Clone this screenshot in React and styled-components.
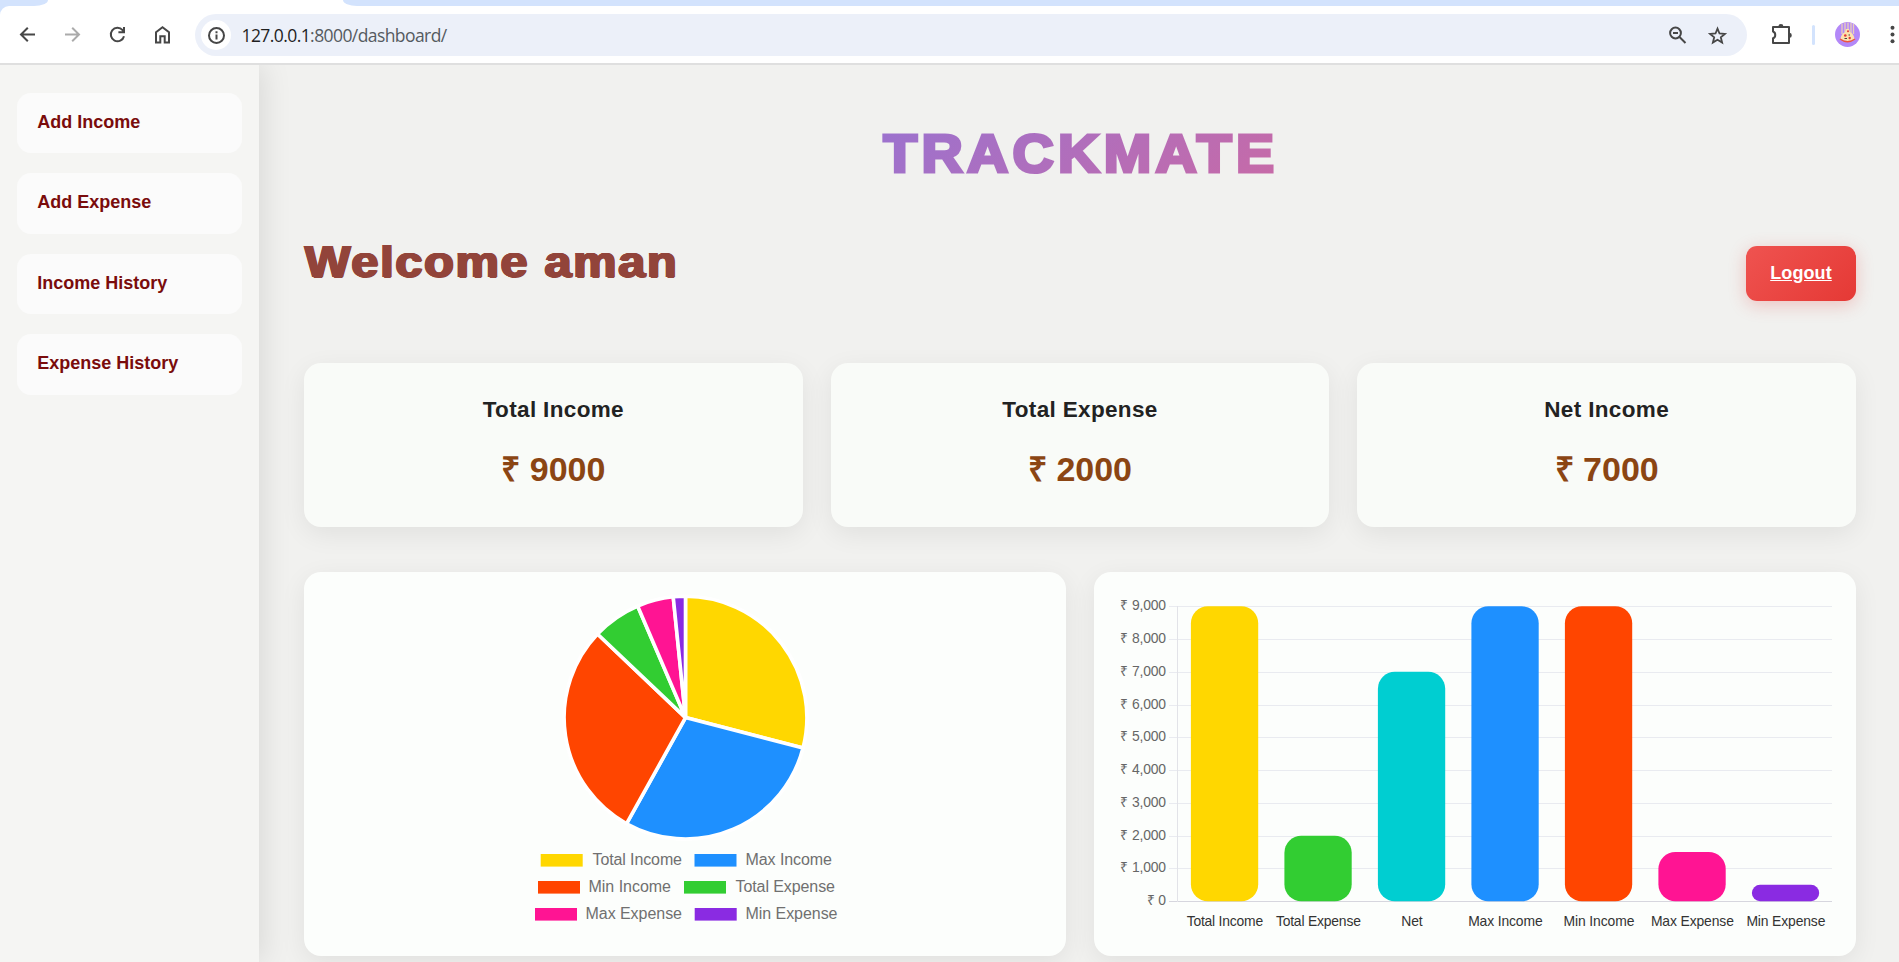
import React from "react";
import styled, { createGlobalStyle } from "styled-components";

const GlobalStyle = createGlobalStyle`
  *, *::before, *::after { box-sizing: border-box; }
  html, body { margin: 0; height: 100%; overflow: hidden; }
  body { background: #f1f1ef; font-family: "Liberation Sans", Arial, sans-serif; }
`;

/* ---------- browser frame ---------- */

const Window = styled.div`
  height: 962px;
  display: flex;
  flex-direction: column;
  overflow: hidden;
`;

const Chrome = styled.header`
  flex: none;
  background: #d3e3fd;
  border-bottom: 2px solid #dfdfdf;
`;

const TabStrip = styled.div`
  display: flex;
  height: 6px;
  background: #fff;
`;

const TabGap = styled.div`
  background: #d3e3fd;
  flex: ${(p) => (p.$grow ? "1" : "none")};
  width: ${(p) => (p.$grow ? "auto" : "48px")};
  border-radius: ${(p) => (p.$grow ? "0 0 0 14px / 0 0 0 6px" : "0 0 14px 0 / 0 0 6px 0")};
`;

const ActiveTab = styled.div`
  width: 295px;
`;

const Toolbar = styled.div`
  display: flex;
  align-items: center;
  height: 57px;
  padding-left: 15px;
  overflow: hidden;
  background: #fff;
  border-top-left-radius: 9px;
`;

const NavButtons = styled.div`
  flex: none;
  display: flex;
  gap: 20px;
`;

const Glyph = styled.svg`
  display: block;
  flex: none;
  width: 25px;
  height: 25px;
  fill: none;
  stroke: ${(p) => (p.$muted ? "#ababab" : "#474747")};
  stroke-width: 2;
`;

const AddressBar = styled.div`
  flex: none;
  display: flex;
  align-items: center;
  width: 1552px;
  height: 42px;
  margin: 1px 0 0 20px;
  padding: 0 17px 0 6px;
  border-radius: 21px;
  background: #ecf0f9;
`;

const SiteInfo = styled.span`
  display: grid;
  place-items: center;
  width: 30px;
  height: 30px;
  border-radius: 50%;
  background: #fff;
`;

const Url = styled.span`
  flex: 1;
  margin-left: 10.5px;
  font: 17.5px/42px "Open Sans", "Noto Sans", sans-serif;
  letter-spacing: -0.58px;
  color: #555a60;
`;

const Host = styled.span`
  color: #1f1f1f;
`;

const AddressActions = styled.div`
  display: flex;
  gap: 15px;
`;

const Actions = styled.div`
  flex: none;
  display: flex;
  align-items: center;
  margin-left: 22px;
`;

const Divider = styled.span`
  width: 3px;
  height: 20px;
  margin: 0 20px 0 18px;
  border-radius: 2px;
  background: #d3e3fd;
`;

const Avatar = styled.svg`
  display: block;
  width: 25px;
  height: 25px;
`;

const MenuGlyph = styled(Glyph)`
  margin-left: 20px;
  fill: #474747;
  stroke: none;
`;

/* ---------- page ---------- */

const Page = styled.div`
  flex: 1;
  display: flex;
  min-height: 0;
  overflow: hidden;
  background: #f1f1ef;
`;

const Sidebar = styled.nav`
  flex: none;
  width: 259px;
  padding: 28px 17px;
  display: flex;
  flex-direction: column;
  gap: 20.3px;
  background: #f5f5f3;
  box-shadow: 4px 0 28px rgba(0, 0, 0, 0.1);
`;

const SideLink = styled.a`
  display: block;
  height: 60.2px;
  padding-left: 20.3px;
  border-radius: 14px;
  background: #fbfbfb;
  color: #7a0c0c;
  font-size: 18px;
  font-weight: 700;
  line-height: 59px;
`;

const Main = styled.main`
  flex: 1;
  min-width: 0;
  padding: 54px 43px 0 45px;
`;

const Title = styled.h1`
  width: max-content;
  margin: 0 auto;
  font-size: 53px;
  font-weight: 700;
  line-height: 70px;
  letter-spacing: 4px;
  transform: translateX(0.5px) scaleX(1.077);
  color: transparent;
  -webkit-text-stroke: 3.2px transparent;
  background: linear-gradient(135deg, #9b72cf, #c86aa6);
  -webkit-background-clip: text;
  background-clip: text;
`;

const Greeting = styled.div`
  display: flex;
  justify-content: space-between;
  align-items: flex-start;
  height: 55px;
  margin-top: 57px;
`;

const Welcome = styled.h2`
  margin: -14px 0 0;
  font-size: 45px;
  font-weight: 700;
  line-height: 60px;
  letter-spacing: 1.6px;
  white-space: nowrap;
  transform: translateX(0.7px) scaleX(1.08);
  transform-origin: left;
  color: #92443a;
  text-shadow: 0.6px 0 #92443a, -0.6px 0 #92443a, 1.2px 0 #92443a, -1.2px 0 #92443a,
    0.6px 0.5px #92443a, -0.6px -0.5px #92443a;
`;

const Logout = styled.a`
  width: 110px;
  height: 55px;
  border-radius: 11px;
  background: linear-gradient(135deg, #ef5350, #e53935);
  box-shadow: 0 4px 17px rgba(229, 57, 53, 0.25);
  color: #fff;
  font-size: 18px;
  font-weight: 700;
  line-height: 54px;
  letter-spacing: 0.1px;
  text-align: center;
  text-decoration: underline;
`;

const CardRow = styled.section`
  display: grid;
  grid-template-columns: repeat(${(p) => p.$columns}, 1fr);
  gap: 28px;
  margin-top: ${(p) => p.$top}px;
`;

const Card = styled.article`
  height: ${(p) => p.$height}px;
  border-radius: 17px;
  background: ${(p) => p.$fill};
  box-shadow: 0 7px 27px rgba(0, 0, 0, 0.07);
  text-align: center;
`;

const StatLabel = styled.h3`
  margin: 33px 0 0;
  font-size: 22.5px;
  font-weight: 700;
  line-height: 28px;
  letter-spacing: 0.35px;
  color: #222;
`;

const StatValue = styled.p`
  margin: 24px 0 0;
  font-size: 34px;
  font-weight: 700;
  line-height: 43px;
  color: #8b4513;
`;

const Chart = styled.svg`
  display: block;
  width: 762px;
  height: 384px;
`;

const LegendText = styled.text`
  font-size: 16px;
  fill: #707070;
`;

const AxisText = styled.text`
  font-size: 13.9px;
  fill: ${(p) => (p.$dark ? "#333" : "#666")};
  text-anchor: ${(p) => (p.$dark ? "middle" : "end")};
`;

/* ---------- data ---------- */

const links = ["Add Income", "Add Expense", "Income History", "Expense History"];

const stats = [
  ["Total Income", 9000],
  ["Total Expense", 2000],
  ["Net Income", 7000],
];

const slices = [
  [9000, "#ffd700"],
  [9000, "#1e90ff"],
  [9000, "#ff4500"],
  [2000, "#32cd32"],
  [1500, "#ff1493"],
  [500, "#8a2be2"],
];

const legend = [
  { label: "Total Income", color: "#ffd700", x: 236.7, y: 282, text: 288.5, width: 89.5 },
  { label: "Max Income", color: "#1e90ff", x: 390.5, y: 282, text: 441.5, width: 86.5 },
  { label: "Min Income", color: "#ff4500", x: 234, y: 309, text: 284.5, width: 82.5 },
  { label: "Total Expense", color: "#32cd32", x: 380, y: 309, text: 431.5, width: 99.5 },
  { label: "Max Expense", color: "#ff1493", x: 231, y: 336, text: 281.5, width: 96.5 },
  { label: "Min Expense", color: "#8a2be2", x: 390.7, y: 336, text: 441.5, width: 92 },
];

const bars = [
  ["Total Income", 9000, "#ffd700", 76.5],
  ["Total Expense", 2000, "#32cd32", 85],
  ["Net", 7000, "#00ced1", 21.5],
  ["Max Income", 9000, "#1e90ff", 74.5],
  ["Min Income", 9000, "#ff4500", 71],
  ["Max Expense", 1500, "#ff1493", 83],
  ["Min Expense", 500, "#8a2be2", 79],
];

function PieChart() {
  const cx = 381.5;
  const cy = 145.6;
  const r = 121.4;
  const total = slices.reduce((sum, [v]) => sum + v, 0);
  let angle = -Math.PI / 2;
  const paths = slices.map(([value, color]) => {
    const start = angle;
    angle += (value / total) * Math.PI * 2;
    const d = `M${cx} ${cy}L${cx + r * Math.cos(start)} ${cy + r * Math.sin(start)}A${r} ${r} 0 0 1 ${
      cx + r * Math.cos(angle)
    } ${cy + r * Math.sin(angle)}Z`;
    return <path key={color} d={d} fill={color} stroke="#fff" strokeWidth="3.6" strokeLinejoin="bevel" />;
  });
  return (
    <Chart viewBox="0 0 762 384">
      {paths}
      {legend.map((l) => (
        <g key={l.label}>
          <rect x={l.x} y={l.y} width="42" height="12.6" fill={l.color} />
          <LegendText x={l.text} y={l.y + 11} textLength={l.width}>{l.label}</LegendText>
        </g>
      ))}
    </Chart>
  );
}

function BarChart() {
  const base = 329.2;
  const step = 32.77;
  return (
    <Chart viewBox="0 0 762 384">
      {Array.from({ length: 10 }, (_, i) => {
        const y = Math.round(base - i * step);
        return (
          <g key={i}>
            <rect x="75" y={y} width="663" height="1" fill={i ? "#e9ebf0" : "#d6d6de"} />
            <AxisText x="72" y={base - i * step + 4} textLength={i ? 45.6 : 19}>
              {`₹ ${(i * 1000).toLocaleString("en-US")}`}
            </AxisText>
          </g>
        );
      })}
      <rect x="83" y="34" width="1" height="296" fill="#e2e3e8" />
      {bars.map(([label, value, color, width], i) => {
        const h = (value / 1000) * step;
        const x = 96.9 + i * 93.5;
        return (
          <g key={label}>
            <rect x={x} y={base - h} width="67.3" height={h} rx={Math.min(17, h / 2)} fill={color} />
            <AxisText $dark x={x + 34} y="353.8" textLength={width}>{label}</AxisText>
          </g>
        );
      })}
    </Chart>
  );
}

export default function App() {
  return (
    <Window>
      <GlobalStyle />
      <Chrome>
        <TabStrip>
          <TabGap />
          <ActiveTab />
          <TabGap $grow />
        </TabStrip>
        <Toolbar>
          <NavButtons>
            <Glyph viewBox="0 0 25 25"><path d="M20 12.5H6M12.8 5.7L6 12.5l6.8 6.8" /></Glyph>
            <Glyph $muted viewBox="0 0 25 25"><path d="M5 12.5h14M12.2 5.7l6.8 6.8-6.8 6.8" /></Glyph>
            <Glyph viewBox="0 0 25 25">
              <path d="M19 14.2A6.7 6.7 0 1 1 17.6 8.2L19 9.8M19 5v5.3h-5.6" />
            </Glyph>
            <Glyph viewBox="0 0 25 25">
              <path d="M6 10.3l6.5-5 6.5 5v10.2h-4.3v-6.2h-4.4v6.2H6z" />
            </Glyph>
          </NavButtons>
          <AddressBar>
            <SiteInfo>
              <Glyph viewBox="0 0 25 25">
                <circle cx="12.5" cy="12.5" r="7.5" />
                <path d="M12.5 11.5v5M12.5 8.3v2" />
              </Glyph>
            </SiteInfo>
            <Url><Host>127.0.0.1</Host>:8000/dashboard/</Url>
            <AddressActions>
              <Glyph viewBox="0 0 25 25">
                <circle cx="10.5" cy="10" r="5.4" />
                <path d="M8 10h5M14.5 14l6 6" />
              </Glyph>
              <Glyph viewBox="0 0 25 25">
                <path strokeWidth="1.8" d="M12.5 5.6l2 4.9 5.4.4-4.1 3.4 1.3 5.2-4.6-2.8-4.6 2.8 1.3-5.2-4.1-3.4 5.4-.4z" />
              </Glyph>
            </AddressActions>
          </AddressBar>
          <Actions>
            <Glyph viewBox="0 0 25 25">
              <path strokeLinejoin="round" d="M4 5H20v15.9H4v-4.6c3-.8 3-5.8 0-6.8z" />
              <path stroke="none" fill="#474747" d="M9.4 4.4a2.5 2.3 0 0 1 5 0zM20.6 10.7a2.2 2.5 0 0 1 0 5z" />
            </Glyph>
            <Divider />
            <Avatar viewBox="0 0 25 25">
              <circle cx="12.5" cy="12.5" r="12.5" fill="#b388f8" />
              <path d="M7 1.8V12M10 .5V10M13 .5V8M16 .9V12M18.5 2V12" stroke="#e9d0b8" strokeWidth="1.3" />
              <path d="M5.5 17q.5-5 4.5-7l1-3h3l1 3q4 2 4.500 7-7 4-14 0z" fill="#fce3ad" />
              <path d="M5 17q7.500 5.500 15 0" fill="none" stroke="#f0563d" strokeWidth="1.5" />
              <g fill="#e53935">
                <circle cx="10.3" cy="13.5" r="1.3" />
                <circle cx="14.7" cy="16" r="1.2" />
                <circle cx="13" cy="9.3" r="1" />
              </g>
              <path d="M9.5 16.5h2.5M13.5 13h1.5" stroke="#444" />
            </Avatar>
            <MenuGlyph viewBox="0 0 25 25">
              <circle cx="12.5" cy="5.7" r="2" />
              <circle cx="12.5" cy="12.5" r="2" />
              <circle cx="12.5" cy="19.3" r="2" />
            </MenuGlyph>
          </Actions>
        </Toolbar>
      </Chrome>
      <Page>
        <Sidebar>
          {links.map((l) => <SideLink key={l}>{l}</SideLink>)}
        </Sidebar>
        <Main>
          <Title>TRACKMATE</Title>
          <Greeting>
            <Welcome>Welcome aman</Welcome>
            <Logout>Logout</Logout>
          </Greeting>
          <CardRow $columns={3} $top={62}>
            {stats.map(([label, value]) => (
              <Card key={label} $height={164} $fill="#f9fbf8">
                <StatLabel>{label}</StatLabel>
                <StatValue>₹ {value}</StatValue>
              </Card>
            ))}
          </CardRow>
          <CardRow $columns={2} $top={45}>
            <Card $height={384} $fill="#fcfefc"><PieChart /></Card>
            <Card $height={384} $fill="#fcfefc"><BarChart /></Card>
          </CardRow>
        </Main>
      </Page>
    </Window>
  );
}
